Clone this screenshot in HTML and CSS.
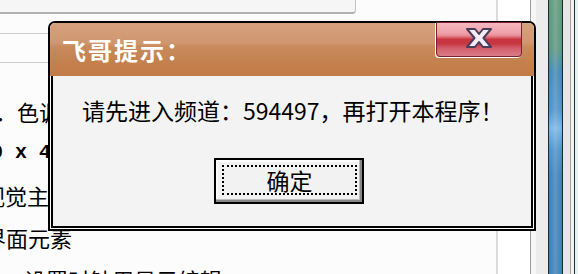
FILE: index.html
```html
<!DOCTYPE html>
<html lang="zh-CN">
<head>
    <meta charset="UTF-8">
    <meta name="viewport" content="width=device-width, initial-scale=1.0">
    <title>飞哥提示</title>
    <link rel="stylesheet" href="styles.css">
</head>
<body>
    <!-- background window -->
    <div class="screen">
        <div class="main">
            <div class="field"><span>（请在下方列表中选择要进入的频道，然后再点击确定按钮）</span></div>
            <div class="rule rule-a"></div>
            <div class="rule rule-b"></div>
            <ul class="list">
                <li class="item-a">２．色调设置</li>
                <li class="item-b">640 x 480</li>
                <li class="item-c">视觉主题</li>
                <li class="item-d">界面元素</li>
                <li class="item-e">、设置时钟用显示编辑：</li>
            </ul>
        </div>
        <div class="gutter"></div>
        <div class="panel"></div>
        <div class="bar"></div>
        <div class="trough"></div>
        <div class="edge"></div>
    </div>

    <!-- message box -->
    <div class="dialog">
        <div class="titlebar">
            <span class="title">飞哥提示：</span>
            <button class="close">
                <svg width="26" height="20" viewBox="0 0 26 20">
                    <polygon points="1,1 9,1 13,6 17,1 25,1 17.5,10 25,19 17,19 13,14 9,19 1,19 8.5,10" fill="#f3ecf2" stroke="#4a3c5a" stroke-width="2" stroke-linejoin="round"/>
                </svg>
            </button>
        </div>
        <div class="client">
            <p class="message">请先进入频道：594497，再打开本程序！</p>
            <button class="ok"><span>确定</span></button>
        </div>
    </div>
</body>
</html>
```

FILE: styles.css
```css
* { box-sizing: border-box; }
html, body { margin: 0; }
body { width: 578px; height: 274px; overflow: hidden; position: relative; background: #fcfcfc; font-family: "Noto Sans CJK SC", sans-serif; color: #000; }

/* background window */
.screen { display: flex; height: 274px; }
.main { width: 498px; border-right: 2px solid #dadada; overflow: hidden; }
.field { width: 356px; height: 14px; background: #f6f6f6; border-right: 1px solid #c4c4c4; border-bottom: 2px solid #b0b0b0; border-radius: 0 0 4px 0; overflow: hidden; }
.field span { display: block; margin-top: -15px; font-size: 13px; line-height: 14px; color: #a6a6a6; white-space: nowrap; }
.rule { border-bottom: 1px solid #cfcfcf; }
.rule-a { height: 20px; }
.rule-b { height: 29px; }
.list { margin: 0; padding: 27px 0 0; list-style: none; }
.list li { height: 42px; line-height: 42px; font-size: 22px; white-space: nowrap; }
.list .item-b { margin-left: -33px; font-family: "Liberation Mono", monospace; font-size: 20px; font-weight: bold; }
.item-a { margin-left: -27px; }
.item-c { margin-left: -17px; }
.item-d { margin-left: -16px; }
.item-e { margin-left: 2px; }

.gutter { width: 33px; background: #fff; border-right: 1px solid #9c9c9c; }
.panel { width: 17px; background: linear-gradient(to right, #f7f7f7 0 5px, #ececec 5px); }
.bar { width: 15px; border-left: 1px solid #1d2b36; border-right: 1px solid #1a2a30;
    background: linear-gradient(to right, rgba(255,255,255,0), rgba(255,255,255,.18) 50%, rgba(255,255,255,0)),
        linear-gradient(#5e9878 0, #5a9480 50px, #3f86b4 72px, #4a92c8 110px, #78b4e4 128px, #4a90c8 150px, #3a80ba 175px, #3a7eb6 100%); }
.trough { width: 8px; background: #e6e6e6; border-right: 1px solid #a4a4a4; }
.edge { width: 7px; background: linear-gradient(to right, #f2f2f2 0 3px, #1e3434 3px 4px, #e6f2f2 4px); }

/* message box */
.dialog { position: absolute; left: 48px; top: 21px; width: 488px; height: 210px; border: 2px solid #000; border-radius: 7px 7px 0 0; background: #fff; display: flex; flex-direction: column; }
.titlebar { height: 53px; flex: none; display: flex; align-items: flex-start; padding-left: 12px; border-radius: 5px 5px 0 0;
    background: linear-gradient(#d6a27e 0, #cf9670 38%, #c98b5e 44%, #c48250 70%, #c17b46 100%); }
.title { align-self: center; color: #fff; font-size: 24px; font-weight: bold; line-height: 28px; letter-spacing: 2px; }
.close { margin: -1px 12px 0 auto; width: 86px; height: 35px; padding: 0 0 3px; display: flex; align-items: center; justify-content: center;
    border: 1px solid #7a2232; border-radius: 0 0 4px 4px; box-shadow: -1px 1px 0 #fff;
    background: linear-gradient(#f6b8c0 0, #eea2aa 30%, #e88e98 38%, #c9343f 50%, #c8353f 62%, #d25e6c 76%, #dc7c88 100%); }
.close svg { display: block; }

.client { flex: 1; margin: 0 1px 1px; border: 2px solid #000; border-top: 0; background: #f3f3f3; padding: 20px 0 0 29px; }
.message { margin: 0; font-size: 23px; line-height: 28px; white-space: nowrap; }
.ok { display: flex; align-items: flex-start; margin: 34px 0 0 132px; width: 150px; height: 46px; padding: 5px 0 0 6px;
    border: 2px solid #000; background: #f2f2f2; font: inherit;
    box-shadow: inset -2px -2px 0 #858585, inset -3px -3px 0 #bcbcbc, inset 2px 2px 0 #fff; }
.ok span { display: block; width: 135px; height: 30px; border: 2px dotted #000; font-size: 23px; line-height: 26px; text-align: center; }
```
